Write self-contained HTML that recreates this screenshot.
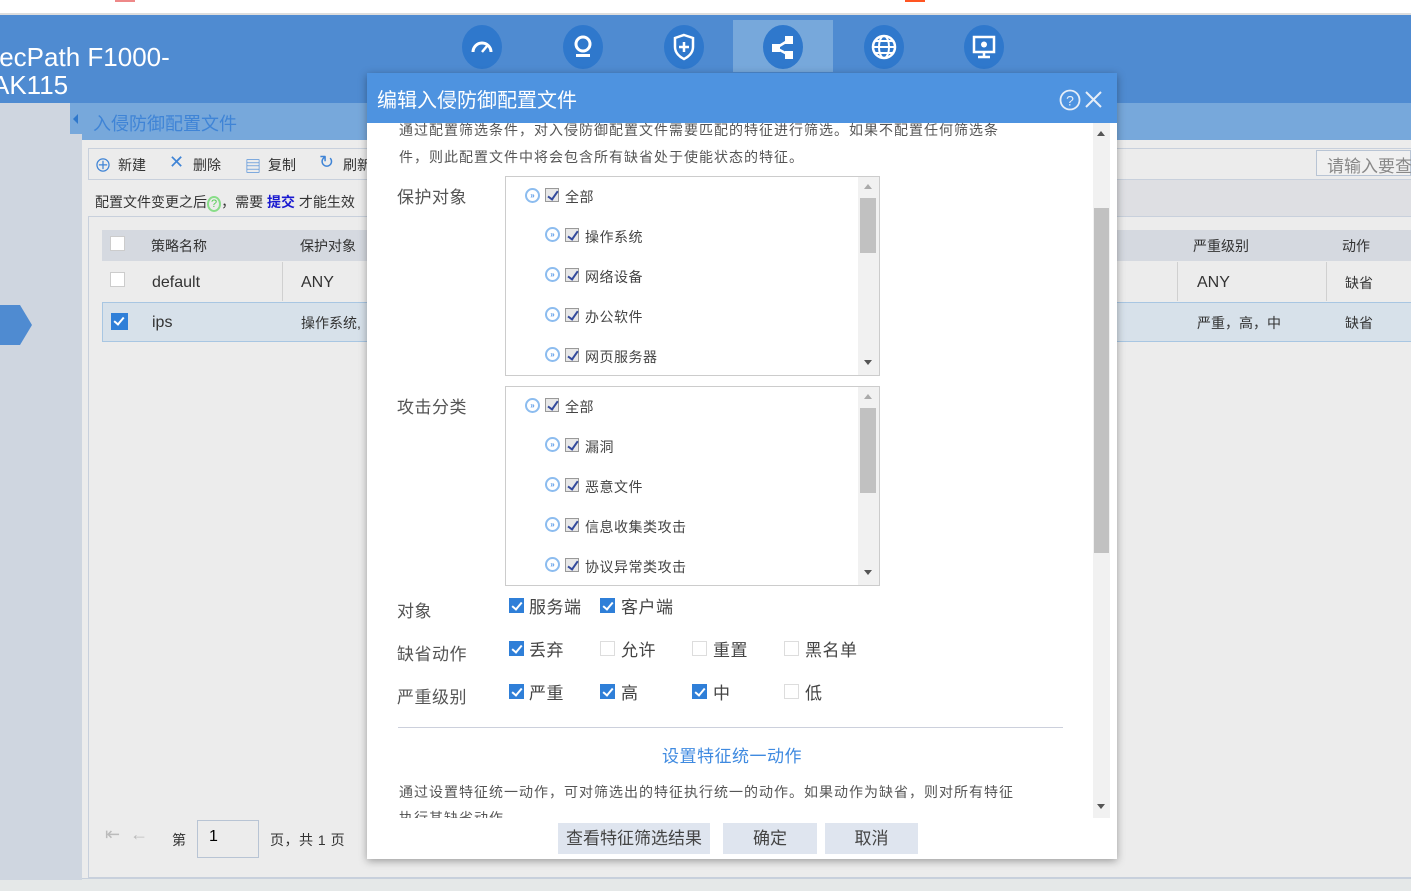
<!DOCTYPE html>
<html><head><meta charset="utf-8">
<style>
*{margin:0;padding:0;box-sizing:border-box}
body{width:1411px;height:891px;overflow:hidden;position:relative;background:#fff;font-family:"Liberation Sans","Noto Sans CJK SC",sans-serif;color:#333}
.a{position:absolute}
.t{position:absolute;white-space:nowrap}
.nav{position:absolute;top:25px;width:44px;height:44px;border-radius:50%;background:#2f78cc}
.cb{position:absolute;width:15px;height:15px;border:1px solid #ccc;background:#fff}
.cb.on{background:#2f7fd8;border-color:#2f7fd8}
.cb.on:after{content:"";position:absolute;left:4px;top:1px;width:4px;height:8px;border:solid #fff;border-width:0 2px 2px 0;transform:rotate(40deg)}
.tc{position:absolute;width:14px;height:14px;border:1px solid #999;background:#e8e8e8}
.tc:after{content:"";position:absolute;left:4px;top:0px;width:4px;height:9px;border:solid #334a9c;border-width:0 2px 2px 0;transform:rotate(35deg)}
.tg{position:absolute;width:15px;height:15px;border-radius:50%;border:2px solid #8cbcef;background:#fff;font-size:8px;color:#5a9be8;line-height:11px;text-align:center;font-weight:bold}
.tl{position:absolute;font-size:14px;color:#444;white-space:nowrap;letter-spacing:.5px}
.lbl{position:absolute;left:397px;font-size:17px;color:#555;letter-spacing:.5px}
.opt{position:absolute;font-size:17px;color:#444;letter-spacing:.5px}
</style></head><body>
<div class="a" style="left:0;top:0;width:1411px;height:13px;background:#fff"></div>
<div class="a" style="left:115px;top:0;width:20px;height:2px;background:#e88"></div>
<div class="a" style="left:905px;top:0;width:20px;height:2px;background:#f52"></div>
<div class="a" style="left:0;top:13px;width:1411px;height:2px;background:#ddd"></div>
<div class="a" style="left:0;top:15px;width:1411px;height:88px;background:#4f8bd1"></div>
<div class="t" style="left:-8px;top:43px;font-size:26px;line-height:28px;color:#fff">&nbsp;ecPath F1000-<br>AK115</div>
<div class="a" style="left:733px;top:20px;width:100px;height:52px;background:#77a8db"></div>
<div class="nav" style="left:462px;width:40px"><svg width="40" height="44" viewBox="2 0 40 44"><path d="M13 27a9 9 0 1 1 18 0" fill="none" stroke="#fff" stroke-width="3"/><path d="M22 27l5-6" stroke="#fff" stroke-width="2.5"/></svg></div>
<div class="nav" style="left:563px;width:40px"><svg width="40" height="44" viewBox="2 0 40 44"><circle cx="22" cy="19" r="7" fill="none" stroke="#fff" stroke-width="3"/><rect x="15" y="29" width="14" height="3" fill="#fff"/></svg></div>
<div class="nav" style="left:664px;width:40px"><svg width="40" height="44" viewBox="2 0 40 44"><path d="M22 10l9 3v9c0 6-5 10-9 12c-4-2-9-6-9-12v-9z" fill="none" stroke="#fff" stroke-width="2.5"/><path d="M22 17v10M17 22h10" stroke="#fff" stroke-width="2.5"/></svg></div>
<div class="nav" style="left:763px;width:40px"><svg width="40" height="44" viewBox="2 0 40 44"><rect x="24" y="11" width="8" height="8" fill="#fff"/><rect x="11" y="19" width="8" height="8" fill="#fff"/><rect x="24" y="26" width="8" height="8" fill="#fff"/><path d="M15 23l13-8M15 23l13 7" stroke="#fff" stroke-width="2.5"/></svg></div>
<div class="nav" style="left:864px;width:40px"><svg width="40" height="44" viewBox="2 0 40 44"><circle cx="22" cy="22" r="11" fill="none" stroke="#fff" stroke-width="2.5"/><ellipse cx="22" cy="22" rx="5" ry="11" fill="none" stroke="#fff" stroke-width="2"/><path d="M11 22h22M13 16h18M13 28h18" stroke="#fff" stroke-width="2"/></svg></div>
<div class="nav" style="left:964px;width:40px"><svg width="40" height="44" viewBox="2 0 40 44"><rect x="12" y="12" width="20" height="15" fill="none" stroke="#fff" stroke-width="2.5"/><circle cx="22" cy="19.5" r="3" fill="#fff"/><path d="M22 27v4M16 32h12" stroke="#fff" stroke-width="2.5"/></svg></div>
<div class="a" style="left:0;top:103px;width:82px;height:777px;background:#cfd6e0"></div>
<div class="a" style="left:0;top:305px;width:20px;height:40px;background:#4f8bd1"></div>
<div class="a" style="left:20px;top:305px;width:0;height:0;border-top:20px solid transparent;border-bottom:20px solid transparent;border-left:12px solid #4f8bd1"></div>
<div class="a" style="left:70px;top:103px;width:12px;height:31px;background:#77a8db"></div>
<div class="a" style="left:73px;top:114px;width:0;height:0;border-top:5px solid transparent;border-bottom:5px solid transparent;border-right:5px solid #2f78cc"></div>
<div class="a" style="left:82px;top:103px;width:1329px;height:37px;background:#77a8db"></div>
<div class="t" style="left:93px;top:110px;font-size:18px;color:#3f84d6">入侵防御配置文件</div>
<div class="a" style="left:82px;top:140px;width:1329px;height:740px;background:#ececec"></div>
<div class="a" style="left:88px;top:148px;width:1323px;height:32px;border:1px solid #c8d0dc;border-right:none"></div>
<div class="t" style="left:94px;top:152px;font-size:18px;color:#3f84d6">⊕</div><div class="t" style="left:118px;top:155px;font-size:14px">新建</div>
<div class="t" style="left:169px;top:152px;font-size:18px;color:#3f84d6">✕</div><div class="t" style="left:193px;top:155px;font-size:14px">删除</div>
<div class="t" style="left:245px;top:153px;font-size:16px;color:#3f84d6">▤</div><div class="t" style="left:268px;top:155px;font-size:14px">复制</div>
<div class="t" style="left:319px;top:152px;font-size:18px;color:#3f84d6">↻</div><div class="t" style="left:343px;top:155px;font-size:14px">刷新</div>
<div class="a" style="left:1316px;top:150px;width:95px;height:26px;border:1px solid #b8c4d4;background:#f0f0f0"></div>
<div class="t" style="left:1327px;top:152px;font-size:17px;color:#888">请输入要查</div>
<div class="a" style="left:1117px;top:180px;width:294px;height:36px;background:#dedfe3"></div>
<div class="t" style="left:95px;top:192px;font-size:14px;color:#333">配置文件变更之后<span style="color:#5c5;border:2px solid #8d8;border-radius:50%;font-size:11px;padding:0 2px">?</span>，需要 <b style="color:#1a1ad0">提交</b> 才能生效</div>
<div class="a" style="left:88px;top:216px;width:1323px;height:662px;border:1px solid #c8d0dc;border-right:none"></div>
<div class="a" style="left:102px;top:230px;width:1309px;height:31px;background:#d5d9e0"></div>
<div class="cb" style="left:110px;top:236px;border-color:#ccc"></div>
<div class="t" style="left:151px;top:236px;font-size:14px">策略名称</div>
<div class="t" style="left:300px;top:236px;font-size:14px">保护对象</div>
<div class="t" style="left:1193px;top:236px;font-size:14px">严重级别</div>
<div class="t" style="left:1342px;top:236px;font-size:14px">动作</div>
<div class="a" style="left:282px;top:262px;width:1px;height:39px;background:#d0d0d0"></div>
<div class="a" style="left:1177px;top:262px;width:1px;height:39px;background:#d0d0d0"></div>
<div class="a" style="left:1326px;top:262px;width:1px;height:39px;background:#d0d0d0"></div>
<div class="cb" style="left:110px;top:272px"></div>
<div class="t" style="left:152px;top:274px;font-size:16px">default</div>
<div class="t" style="left:301px;top:274px;font-size:16px">ANY</div>
<div class="t" style="left:1197px;top:274px;font-size:16px">ANY</div>
<div class="t" style="left:1345px;top:273px;font-size:14px">缺省</div>
<div class="a" style="left:102px;top:302px;width:1309px;height:40px;background:#d7e1ea;border:1px solid #a8c6e2;border-right:none"></div>
<div class="cb on" style="left:111px;top:313px;width:17px;height:17px"></div>
<div class="t" style="left:152px;top:314px;font-size:16px">ips</div>
<div class="t" style="left:301px;top:313px;font-size:14px">操作系统,</div>
<div class="t" style="left:1197px;top:313px;font-size:14px">严重，高，中</div>
<div class="t" style="left:1345px;top:313px;font-size:14px">缺省</div>
<div class="t" style="left:105px;top:824px;font-size:18px;color:#bbb">⇤ &nbsp;←</div>
<div class="t" style="left:172px;top:830px;font-size:14px">第</div>
<div class="a" style="left:197px;top:820px;width:62px;height:38px;border:1px solid #b8c4d4"></div>
<div class="t" style="left:209px;top:828px;font-size:16px;color:#000">1</div>
<div class="t" style="left:270px;top:830px;font-size:14px;letter-spacing:.5px">页，共 1 页</div>
<div class="a" style="left:82px;top:878px;width:1329px;height:13px;background:#e5e8e8;border-top:1px solid #c8d0dc"></div>
<div class="a" style="left:0;top:880px;width:82px;height:11px;background:#e5e8e8"></div>

<!-- modal -->
<div class="a" style="left:367px;top:73px;width:750px;height:786px;background:#fff;box-shadow:0 2px 8px rgba(0,0,0,.35)"></div>
<div class="a" style="left:367px;top:73px;width:750px;height:50px;background:#4e93e0"></div>
<div class="t" style="left:377px;top:84px;font-size:20px;color:#fff">编辑入侵防御配置文件</div>
<svg class="a" style="left:1059px;top:88px" width="44" height="24"><circle cx="11" cy="12" r="9.5" fill="#4e93e0" stroke="#e6eef8" stroke-width="1.8"/><text x="11" y="17.5" font-size="14" fill="#e6eef8" text-anchor="middle" font-family="Liberation Sans">?</text><path d="M27 4l15 15M42 4L27 19" stroke="#e6eef8" stroke-width="2"/></svg>
<div class="a" style="left:1093px;top:123px;width:17px;height:695px;background:#f1f1f1"></div>
<div class="a" style="left:1094px;top:208px;width:15px;height:345px;background:#c1c1c1"></div>
<div class="a" style="left:1097px;top:131px;border-left:4px solid transparent;border-right:4px solid transparent;border-bottom:5px solid #555"></div>
<div class="a" style="left:1097px;top:804px;border-left:4px solid transparent;border-right:4px solid transparent;border-top:5px solid #555"></div>
<div class="t" style="left:399px;top:120px;font-size:14px;color:#555;letter-spacing:1px">通过配置筛选条件，对入侵防御配置文件需要匹配的特征进行筛选。如果不配置任何筛选条</div>
<div class="t" style="left:399px;top:147px;font-size:14px;color:#555;letter-spacing:1px">件，则此配置文件中将会包含所有缺省处于使能状态的特征。</div>
<div class="lbl" style="top:183px">保护对象</div>
<div class="a" style="left:505px;top:176px;width:375px;height:200px;border:1px solid #ccc"></div>
<div class="a" style="left:858px;top:177px;width:21px;height:198px;background:#f1f1f1"></div>
<div class="a" style="left:860px;top:198px;width:16px;height:55px;background:#c1c1c1"></div>
<div class="a" style="left:864px;top:184px;border-left:4px solid transparent;border-right:4px solid transparent;border-bottom:5px solid #aaa"></div>
<div class="a" style="left:864px;top:360px;border-left:4px solid transparent;border-right:4px solid transparent;border-top:5px solid #555"></div>
<div class="tg" style="left:525px;top:188px">»</div><div class="tc" style="left:545px;top:188px"></div><div class="tl" style="left:565px;top:187px">全部</div>
<div class="tg" style="left:545px;top:227px">»</div><div class="tc" style="left:565px;top:228px"></div><div class="tl" style="left:585px;top:227px">操作系统</div>
<div class="tg" style="left:545px;top:267px">»</div><div class="tc" style="left:565px;top:268px"></div><div class="tl" style="left:585px;top:267px">网络设备</div>
<div class="tg" style="left:545px;top:307px">»</div><div class="tc" style="left:565px;top:308px"></div><div class="tl" style="left:585px;top:307px">办公软件</div>
<div class="tg" style="left:545px;top:347px">»</div><div class="tc" style="left:565px;top:348px"></div><div class="tl" style="left:585px;top:347px">网页服务器</div>
<div class="lbl" style="top:393px">攻击分类</div>
<div class="a" style="left:505px;top:386px;width:375px;height:200px;border:1px solid #ccc"></div>
<div class="a" style="left:858px;top:387px;width:21px;height:198px;background:#f1f1f1"></div>
<div class="a" style="left:860px;top:408px;width:16px;height:85px;background:#c1c1c1"></div>
<div class="a" style="left:864px;top:394px;border-left:4px solid transparent;border-right:4px solid transparent;border-bottom:5px solid #aaa"></div>
<div class="a" style="left:864px;top:570px;border-left:4px solid transparent;border-right:4px solid transparent;border-top:5px solid #555"></div>
<div class="tg" style="left:525px;top:398px">»</div><div class="tc" style="left:545px;top:398px"></div><div class="tl" style="left:565px;top:397px">全部</div>
<div class="tg" style="left:545px;top:437px">»</div><div class="tc" style="left:565px;top:438px"></div><div class="tl" style="left:585px;top:437px">漏洞</div>
<div class="tg" style="left:545px;top:477px">»</div><div class="tc" style="left:565px;top:478px"></div><div class="tl" style="left:585px;top:477px">恶意文件</div>
<div class="tg" style="left:545px;top:517px">»</div><div class="tc" style="left:565px;top:518px"></div><div class="tl" style="left:585px;top:517px">信息收集类攻击</div>
<div class="tg" style="left:545px;top:557px">»</div><div class="tc" style="left:565px;top:558px"></div><div class="tl" style="left:585px;top:557px">协议异常类攻击</div>
<div class="lbl" style="top:597px">对象</div>
<div class="cb on" style="left:509px;top:598px"></div><div class="opt" style="left:529px;top:593px">服务端</div>
<div class="cb on" style="left:600px;top:598px"></div><div class="opt" style="left:621px;top:593px">客户端</div>
<div class="lbl" style="top:640px">缺省动作</div>
<div class="cb on" style="left:509px;top:641px"></div><div class="opt" style="left:529px;top:636px">丢弃</div>
<div class="cb" style="left:600px;top:641px;border-color:#ddd"></div><div class="opt" style="left:621px;top:636px">允许</div>
<div class="cb" style="left:692px;top:641px;border-color:#ddd"></div><div class="opt" style="left:713px;top:636px">重置</div>
<div class="cb" style="left:784px;top:641px;border-color:#ddd"></div><div class="opt" style="left:805px;top:636px">黑名单</div>
<div class="lbl" style="top:683px">严重级别</div>
<div class="cb on" style="left:509px;top:684px"></div><div class="opt" style="left:529px;top:679px">严重</div>
<div class="cb on" style="left:600px;top:684px"></div><div class="opt" style="left:621px;top:679px">高</div>
<div class="cb on" style="left:692px;top:684px"></div><div class="opt" style="left:713px;top:679px">中</div>
<div class="cb" style="left:784px;top:684px;border-color:#ddd"></div><div class="opt" style="left:805px;top:679px">低</div>
<div class="a" style="left:398px;top:727px;width:665px;height:1px;background:#ccd0dc"></div>
<div class="t" style="left:662px;top:742px;font-size:17px;color:#3f8ae0;letter-spacing:.5px">设置特征统一动作</div>
<div class="a" style="left:390px;top:780px;width:700px;height:38px;overflow:hidden">
<div class="t" style="left:9px;top:2px;font-size:14px;color:#555;letter-spacing:1px">通过设置特征统一动作，可对筛选出的特征执行统一的动作。如果动作为缺省，则对所有特征</div>
<div class="t" style="left:9px;top:28px;font-size:14px;color:#555;letter-spacing:1px">执行其缺省动作</div></div>
<div class="a" style="left:558px;top:823px;width:152px;height:31px;background:#dfe5ef;font-size:17px;color:#444;text-align:center;line-height:31px">查看特征筛选结果</div>
<div class="a" style="left:723px;top:823px;width:94px;height:31px;background:#dfe5ef;font-size:17px;color:#444;text-align:center;line-height:31px">确定</div>
<div class="a" style="left:825px;top:823px;width:93px;height:31px;background:#dfe5ef;font-size:17px;color:#444;text-align:center;line-height:31px">取消</div>
</body></html>
